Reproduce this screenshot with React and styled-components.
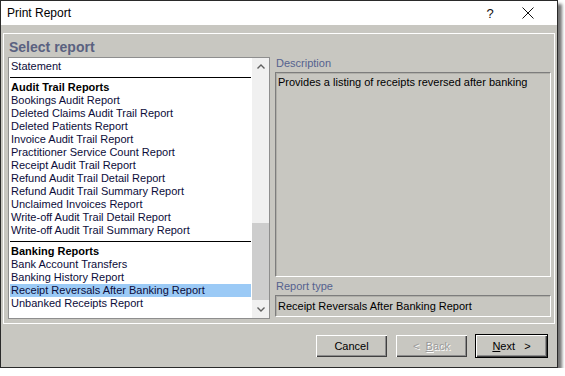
import React from 'react'
import styled, { createGlobalStyle } from 'styled-components'

const Global = createGlobalStyle`
  html, body { margin: 0; padding: 0; background: #ffffff; }
  body { font-family: "Liberation Sans", Arial, sans-serif; font-size: 11px; }
`;

const Window = styled.div`
  width: 556px;
  height: 366px;
  border: 1px solid #2a2a2a;
  background: #c8c7c1;
  box-shadow: 4px 4px 3px rgba(0, 0, 0, 0.55);
  display: flex;
  flex-direction: column;
`;

const TitleBar = styled.div`
  height: 24px;
  flex-shrink: 0;
  background: #ffffff;
  display: flex;
  align-items: center;
  padding-left: 6px;
  font-size: 12px;
  color: #000;
`;

const Title = styled.div`
  flex: 1;
`;

const TitleButton = styled.div`
  width: 16px;
  margin-right: ${p => p.mr}px;
  display: flex;
  justify-content: center;
  align-items: center;
  font-size: 13px;
  color: #111;
`;

const Body = styled.div`
  flex: 1;
  display: flex;
  flex-direction: column;
  padding: 8px 2px 9px 2px;
`;

const Panel = styled.div`
  border: 1px solid #ffffff;
  padding: 4px 3px 4px 4px;
  display: grid;
  grid-template-columns: 262px 1fr;
  grid-template-rows: 17px 262px;
  column-gap: 5px;
  row-gap: 2px;
`;

const Heading = styled.div`
  grid-column: 1 / 3;
  font-size: 14px;
  font-weight: bold;
  color: #5a6180;
  line-height: 19px;
  height: 17px;
  padding-left: 1px;
`;

const ListBox = styled.div`
  border: 1px solid #8e8e8e;
  background: #ffffff;
  display: flex;
  overflow: hidden;
`;

const Rows = styled.div`
  flex: 1;
  padding-top: 2px;
`;

const Row = styled.div`
  height: 13px;
  line-height: 13px;
  margin: 0 1px;
  padding-left: 1px;
  white-space: nowrap;
  color: ${p => (p.header ? '#000' : '#0c0c3a')};
  font-weight: ${p => (p.header ? 'bold' : 'normal')};
  background: ${p => (p.selected ? '#9bcaf6' : 'transparent')};
`;

const Separator = styled.div`
  height: 8px;
  margin: 0 1px;
  display: flex;
  align-items: flex-start;
  &::after {
    content: '';
    margin-top: 4px;
    height: 1px;
    flex: 1;
    background: #000;
  }
`;

const ScrollBar = styled.div`
  width: 17px;
  background: #f0f0f0;
  display: flex;
  flex-direction: column;
`;

const Arrow = styled.div`
  height: 17px;
  display: flex;
  align-items: center;
  justify-content: center;
`;

const Track = styled.div`
  flex: 1;
  display: flex;
  flex-direction: column;
  padding-top: 148px;
`;

const Thumb = styled.div`
  height: 77px;
  background: #cdcdcd;
`;

const RightCol = styled.div`
  display: flex;
  flex-direction: column;
`;

const Label = styled.div`
  height: 13px;
  line-height: 13px;
  color: #55628f;
  padding-left: 1px;
  margin-top: ${p => p.top || 0}px;
`;

const Field = styled.div`
  box-sizing: border-box;
  margin-top: 2px;
  height: ${p => p.h}px;
  border: 1px solid;
  border-color: #7d7d7d #ffffff #ffffff #7d7d7d;
  box-shadow: inset 1px 1px 0 #b0afa9;
  padding: ${p => p.pad};
  color: #000;
  line-height: 13px;
  white-space: nowrap;
`;

const Buttons = styled.div`
  margin-top: 10px;
  display: flex;
  justify-content: flex-end;
  gap: 7px;
  padding-right: 7px;
`;

const Button = styled.div`
  width: 73px;
  height: 24px;
  box-sizing: border-box;
  display: flex;
  align-items: center;
  justify-content: center;
  border: 1px solid ${p => (p.primary ? '#000' : 'transparent')};
  box-shadow: inset 1px 1px 0 #fff, inset -1px -1px 0 #404040, inset -2px -2px 0 #8c8c8c;
  color: ${p => (p.disabled ? '#9a9a9a' : '#000')};
  text-shadow: ${p => (p.disabled ? '1px 1px 0 #fff' : 'none')};
  white-space: pre;
  font-size: 11px;
`;

const U = styled.span`
  text-decoration: underline;
`;

const Chevron = ({ up }) => (
  <svg width="8" height="5" viewBox="0 0 8 5">
    <path
      d={up ? 'M0.5 4.5 L4 1 L7.5 4.5' : 'M0.5 0.5 L4 4 L7.5 0.5'}
      fill="none"
      stroke="#606060"
      strokeWidth="1.4"
    />
  </svg>
);

const audit = [
  'Bookings Audit Report',
  'Deleted Claims Audit Trail Report',
  'Deleted Patients Report',
  'Invoice Audit Trail Report',
  'Practitioner Service Count Report',
  'Receipt Audit Trail Report',
  'Refund Audit Trail Detail Report',
  'Refund Audit Trail Summary Report',
  'Unclaimed Invoices Report',
  'Write-off Audit Trail Detail Report',
  'Write-off Audit Trail Summary Report',
];

const banking = [
  'Bank Account Transfers',
  'Banking History Report',
  'Receipt Reversals After Banking Report',
  'Unbanked Receipts Report',
];

const selected = 'Receipt Reversals After Banking Report';

const App = () => (
  <>
    <Global />
    <Window>
      <TitleBar>
        <Title>Print Report</Title>
        <TitleButton mr={22}>?</TitleButton>
        <TitleButton mr={21}>
          <svg width="12" height="12" viewBox="0 0 12 12">
            <path d="M0.5 0.5 L11.5 11.5 M11.5 0.5 L0.5 11.5" stroke="#111" strokeWidth="1" />
          </svg>
        </TitleButton>
      </TitleBar>
      <Body>
        <Panel>
          <Heading>Select report</Heading>
          <ListBox>
            <Rows>
              <Row>Statement</Row>
              <Separator />
              <Row header>Audit Trail Reports</Row>
              {audit.map(r => <Row key={r}>{r}</Row>)}
              <Separator />
              <Row header>Banking Reports</Row>
              {banking.map(r => <Row key={r} selected={r === selected}>{r}</Row>)}
            </Rows>
            <ScrollBar>
              <Arrow><Chevron up /></Arrow>
              <Track><Thumb /></Track>
              <Arrow><Chevron /></Arrow>
            </ScrollBar>
          </ListBox>
          <RightCol>
            <Label>Description</Label>
            <Field h={205} pad="3px 2px">Provides a listing of receipts reversed after banking</Field>
            <Label top={3}>Report type</Label>
            <Field h={22} pad="4px 2px">{selected}</Field>
          </RightCol>
        </Panel>
        <Buttons>
          <Button>Cancel</Button>
          <Button disabled>{'<  '}<U>B</U>ack</Button>
          <Button primary><U>N</U>{'ext   >'}</Button>
        </Buttons>
      </Body>
    </Window>
  </>
);

export default App
